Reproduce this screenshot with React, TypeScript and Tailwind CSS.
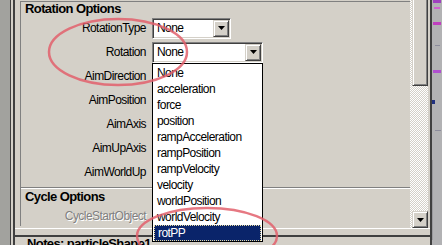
import React from "react";

type Row = { label: string; combo?: { value: string; width: string } };

const rotationRows: Row[] = [
  { label: "RotationType", combo: { value: "None", width: "w-[79px]" } },
  { label: "Rotation", combo: { value: "None", width: "w-[111px]" } },
  { label: "AimDirection" },
  { label: "AimPosition" },
  { label: "AimAxis" },
  { label: "AimUpAxis" },
  { label: "AimWorldUp" },
];

const listItems = [
  "None",
  "acceleration",
  "force",
  "position",
  "rampAcceleration",
  "rampPosition",
  "rampVelocity",
  "velocity",
  "worldPosition",
  "worldVelocity",
  "rotPP",
];

const raised =
  "border border-t-[#d4d0c8] border-l-[#d4d0c8] border-r-[#404040] border-b-[#404040] shadow-[inset_1px_1px_#ffffff,inset_-1px_-1px_#808080] bg-[#d4d0c8]";

function DownArrow() {
  return (
    <svg width="7" height="4" viewBox="0 0 7 4">
      <path d="M0 0h7L3.5 4z" fill="#000" />
    </svg>
  );
}

function Combo({ value, width }: { value: string; width: string }) {
  return (
    <div
      className={`${width} flex h-[21px] items-center border border-t-[#808080] border-l-[#808080] border-r-white border-b-white bg-white shadow-[inset_1px_1px_#404040,inset_-1px_-1px_#d4d0c8]`}
    >
      <span className="flex-1 pl-[4px] leading-[17px]">{value}</span>
      <div className={`mr-[1px] flex h-[17px] w-[16px] items-center justify-center ${raised}`}>
        <DownArrow />
      </div>
    </div>
  );
}

export default function App() {
  return (
    <div className="relative flex h-[245px] w-[442px] overflow-hidden bg-[#d4d0c8] font-['Liberation_Sans',Arial,sans-serif] text-[12px] tracking-[-0.55px] text-black">
      {/* window behind, left */}
      <div className="w-[10px] shrink-0 bg-[#a2a29e]" />

      <div className="flex w-[420px] shrink-0 border-l border-[#404040] pl-[2px]">
        <div className="flex flex-1 flex-col border-l-2 border-[#404040]">
          <div className="flex h-[228px] shrink-0">
            {/* scroll content */}
            <div className="w-[395px] shrink-0 pl-[5px]">
              <div className="mt-[1px] border-t border-l border-[#808080]">
                <div className="h-[14px] pl-[4px] text-[13px] font-bold leading-[14px] tracking-[-0.6px]">
                  Rotation Options
                </div>
                {rotationRows.map((row) => (
                  <div key={row.label} className="flex h-[24px] items-center">
                    <div className="w-[125px] text-right">{row.label}</div>
                    {row.combo && (
                      <div className="ml-[6px]">
                        <Combo value={row.combo.value} width={row.combo.width} />
                      </div>
                    )}
                  </div>
                ))}
                <div className="mt-[3px] h-[2px] border-t border-[#808080] bg-white" />
                <div className="h-[15px] pl-[4px] text-[13px] font-bold leading-[15px] tracking-[-0.6px]">
                  Cycle Options
                </div>
                <div className="mt-[2px] flex h-[20px] items-center">
                  <div className="w-[125px] text-right text-[#808080] [text-shadow:1px_1px_#ffffff]">
                    CycleStartObject
                  </div>
                </div>
              </div>
            </div>

            {/* scrollbar */}
            <div className="flex w-[18px] shrink-0 flex-col bg-[repeating-conic-gradient(#d4d0c8_0_25%,#ffffff_0_50%)] bg-[length:2px_2px]">
              <div className={`-mt-[2px] ml-[2px] h-[88px] w-[16px] ${raised}`} />
              <div className="flex-1" />
              <div className={`ml-[2px] flex h-[17px] w-[16px] items-center justify-center ${raised}`}>
                <DownArrow />
              </div>
            </div>
          </div>

          <div className="h-[1px] shrink-0 bg-white" />
          <div className="h-[6px] shrink-0" />
          <div className="h-[2px] shrink-0 bg-[#404040]" />
          <div className="shrink-0 pl-[12px] text-[13px] font-bold leading-[13px] tracking-[-0.6px]">
            Notes: particleShape1
          </div>
        </div>
      </div>

      {/* window behind, right */}
      <div className="w-[12px] shrink-0 border-l-2 border-[#404040] bg-[#b2b2b4]">
        <svg width="10" height="245" viewBox="0 0 10 245">
          <rect x="1" y="0" width="8" height="3" fill="#a040c0" />
          <rect x="2" y="7" width="6" height="2" fill="#d060d0" />
          <rect x="1" y="22" width="8" height="3" fill="#c040c0" />
          <rect x="3" y="45" width="5" height="1" fill="#8c8c9c" />
          <rect x="1" y="70" width="8" height="3" fill="#b050d0" />
          <rect x="0" y="100" width="3" height="4" fill="#203080" />
          <rect x="3" y="130" width="6" height="1" fill="#8c8c9c" />
          <rect x="0" y="160" width="1" height="80" fill="#9a9a9e" />
        </svg>
      </div>

      {/* open dropdown list */}
      <div className="absolute left-[152px] top-[63px] w-[111px] border border-black bg-white pt-[1px]">
        {listItems.map((item) =>
          item === "rotPP" ? (
            <div
              key={item}
              className="mx-[1px] h-[16px] border border-dotted border-[#e8dca0] bg-[#0a246a] pl-[3px] leading-[14px] text-white"
            >
              {item}
            </div>
          ) : (
            <div key={item} className="h-[16px] pl-[4px] leading-[16px]">
              {item}
            </div>
          ),
        )}
      </div>

      {/* red annotation marks */}
      <svg className="pointer-events-none absolute left-0 top-0" width="442" height="245" viewBox="0 0 442 245">
        <ellipse cx="118" cy="52" rx="69" ry="33" fill="none" stroke="#e2606c" strokeWidth="2.5" opacity="0.85" />
        <ellipse cx="207" cy="236" rx="70" ry="28" fill="none" stroke="#e2606c" strokeWidth="2.5" opacity="0.85" />
      </svg>
    </div>
  );
}
